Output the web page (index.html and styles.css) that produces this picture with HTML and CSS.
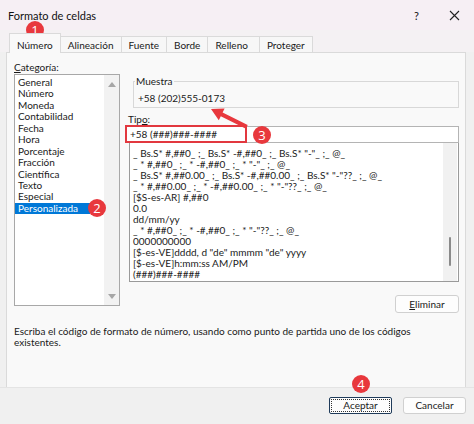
FILE: index.html
```html
<!DOCTYPE html>
<html lang="es">
<head>
<meta charset="utf-8">
<title>Formato de celdas</title>
<link rel="stylesheet" href="styles.css">
</head>
<body>
<div class="window">
  <header class="titlebar">
    <span class="title">Formato de celdas</span>
    <div class="title-actions">
      <span class="help">?</span>
      <svg class="close" width="11" height="11" viewBox="0 0 11 11"><path d="M1 1L10 10M10 1L1 10" stroke="#222" stroke-width="1.1" fill="none"/></svg>
    </div>
  </header>
  <nav class="tabs">
    <div class="tab active">Número</div>
    <div class="tab">Alineación</div>
    <div class="tab">Fuente</div>
    <div class="tab">Borde</div>
    <div class="tab wide">Relleno</div>
    <div class="tab">Proteger</div>
  </nav>
  <main class="panel">
    <div class="columns">
      <section class="cat">
        <div class="label"><u>C</u>ategoría:</div>
        <div class="catlist">
          <ul class="items">
            <li>General</li>
            <li>Número</li>
            <li>Moneda</li>
            <li>Contabilidad</li>
            <li>Fecha</li>
            <li>Hora</li>
            <li>Porcentaje</li>
            <li>Fracción</li>
            <li>Científica</li>
            <li>Texto</li>
            <li>Especial</li>
            <li class="selected">Personalizada</li>
          </ul>
          <div class="vscroll">
            <svg width="8" height="5" viewBox="0 0 8 5"><path d="M0 5L4 0L8 5Z" fill="#a6a6a6"/></svg>
            <svg width="8" height="5" viewBox="0 0 8 5"><path d="M0 0L4 5L8 0Z" fill="#a6a6a6"/></svg>
          </div>
        </div>
      </section>
      <section class="fmt">
        <fieldset class="sample">
          <legend>Muestra</legend>
          <div class="sample-value">+58 (202)555-0173</div>
        </fieldset>
        <div class="label tipo">Tip<u>o</u>:</div>
        <div class="input">+58 (###)###-####</div>
        <div class="fmtlist">
          <ul class="codes">
            <li>_ Bs.S* #,##0_ ;_ Bs.S* -#,##0_ ;_ Bs.S* "-"_ ;_ @_</li>
            <li>_ * #,##0_ ;_ * -#,##0_ ;_ * "-"_ ;_ @_</li>
            <li>_ Bs.S* #,##0.00_ ;_ Bs.S* -#,##0.00_ ;_ Bs.S* "-"??_ ;_ @_</li>
            <li>_ * #,##0.00_ ;_ * -#,##0.00_ ;_ * "-"??_ ;_ @_</li>
            <li>[$S-es-AR] #,##0</li>
            <li>0.0</li>
            <li>dd/mm/yy</li>
            <li>_ * #,##0_ ;_ * -#,##0_ ;_ * "-"??_ ;_ @_</li>
            <li>0000000000</li>
            <li>[$-es-VE]dddd, d "de" mmmm "de" yyyy</li>
            <li>[$-es-VE]h:mm:ss AM/PM</li>
            <li>(###)###-####</li>
          </ul>
          <div class="vscroll2"><span class="thumb"></span></div>
        </div>
        <div class="btnrow"><button class="btn small"><u>E</u>liminar</button></div>
      </section>
    </div>
    <p class="desc">Escriba el código de formato de número, usando como punto de partida uno de los códigos existentes.</p>
  </main>
  <footer class="footer">
    <button class="btn default"><span class="focus">Aceptar</span></button>
    <button class="btn">Cancelar</button>
  </footer>

  <div class="redbox"></div>
  <svg class="arrow" width="474" height="424" viewBox="0 0 474 424">
    <polygon points="211,109 224.6,108.6 222.6,112.6 247.7,125.1 245.9,128.7 220.8,116.2 218.8,120.2" fill="#e8383d"/>
  </svg>
  <span class="badge b1">1</span>
  <span class="badge b2">2</span>
  <span class="badge b3">3</span>
  <span class="badge b4">4</span>
</div>
</body>
</html>
```

FILE: styles.css
```css
* { box-sizing: border-box; }
html, body { margin: 0; padding: 0; }
body {
  width: 474px;
  height: 424px;
  overflow: hidden;
  background: #f3f3f3;
  font-family: Lato, "Noto Sans", sans-serif;
  font-size: 10px;
  color: #1a1a1a;
}
.window {
  position: relative;
  width: 474px;
  height: 424px;
  display: flex;
  flex-direction: column;
  background: #f0f0f0;
}
.titlebar {
  height: 30px;
  flex: none;
  display: flex;
  align-items: center;
  justify-content: space-between;
  padding: 0 14px 0 8px;
  background: #f6eff4;
  font-size: 11px;
  line-height: 13px;
  color: #111;
}
.title-actions { display: flex; align-items: center; gap: 30px; }
.help { font-size: 11px; }
.close { display: block; }

.tabs {
  height: 22px;
  flex: none;
  display: flex;
  align-items: flex-end;
  padding-left: 10px;
  background: #f4f1f3;
}
.tab {
  height: 16px;
  padding: 0 7px;
  border: 1px solid #dadada;
  border-bottom: none;
  margin-left: -1px;
  background: #f7f7f7;
  display: flex;
  align-items: center;
  line-height: 12px;
  color: #1a1a1a;
}
.tab.wide { padding: 0 11px 0 7px; }
.tab.active {
  height: 20px;
  margin-bottom: -1px;
  padding-top: 2px;
  background: #f9f9f9;
  position: relative;
  z-index: 1;
}

.panel {
  flex: none;
  height: 336px;
  margin: 0 8px 0 6px;
  border: 1px solid #dadada;
  background: #f9f9f9;
  padding: 8px 6px 0 7px;
}
.columns {
  display: grid;
  grid-template-columns: 106px 334px;
  column-gap: 5px;
  align-items: start;
}
.label { line-height: 12px; height: 12px; }
.label u { text-decoration-thickness: 1px; text-underline-offset: 1px; }

.catlist {
  margin-top: 1px;
  height: 232px;
  border: 1px solid #a8a8a8;
  background: #fff;
  display: flex;
}
.items {
  list-style: none;
  margin: 0;
  padding: 2px 0 0 0;
  flex: 1;
}
.items li {
  line-height: 11.45px;
  height: 11.45px;
  padding-left: 3px;
  white-space: nowrap;
}
.items li.selected {
  width: 75px;
  background: #0078d7;
  color: #fff;
}
.vscroll {
  width: 15px;
  background: #f2f2f2;
  display: flex;
  flex-direction: column;
  justify-content: space-between;
  align-items: center;
  padding: 7px 0 6px;
}

.sample {
  margin: 14px 0 0 8px;
  padding: 5px 4px 3px 4px;
  border: 1px solid #d8d8d8;
  min-width: 0;
}
.sample legend {
  padding: 0 1px;
  margin-left: -3px;
  line-height: 12px;
}
.sample-value { line-height: 12px; }

.tipo { margin: 5px 0 0 3px; }
.input {
  margin-top: 1px;
  height: 17px;
  border: 1px solid #b4b4b4;
  background: #fff;
  padding-left: 4px;
  line-height: 15px;
}
.fmtlist {
  margin-left: 4px;
  height: 139px;
  border: 1px solid #9a9a9a;
  border-top: none;
  background: #fff;
  display: flex;
  overflow: hidden;
}
.codes {
  list-style: none;
  margin: 0;
  padding: 5px 0 0 3px;
  flex: 1;
}
.codes li {
  line-height: 11px;
  height: 11px;
  white-space: nowrap;
}
.vscroll2 {
  width: 14px;
  background: #f1f1f1;
  margin-right: 1px;
  display: flex;
  justify-content: center;
  padding-top: 94px;
}
.thumb {
  display: block;
  width: 2px;
  height: 29px;
  background: #8a8a8a;
  border-radius: 1px;
}

.btnrow {
  display: flex;
  justify-content: flex-end;
  margin-top: 13px;
}
.btn {
  font-family: inherit;
  font-size: 10px;
  color: #1a1a1a;
  width: 63px;
  height: 17px;
  padding: 0;
  border: 1px solid #d0d0d0;
  border-radius: 3px;
  background: #fdfdfd;
  line-height: 15px;
}
.btn.small { width: 64px; height: 18px; }
.btn u { text-decoration-thickness: 1px; text-underline-offset: 1px; }
.btn.default {
  border: 1px solid #1f3b5a;
  padding: 1px;
  border-radius: 2px;
}
.focus {
  display: block;
  height: 100%;
  border: 1px dotted #333;
  line-height: 11px;
}

.desc {
  margin: 13px 0 0 0;
  width: 442px;
  line-height: 11px;
}

.footer {
  flex: 1;
  display: flex;
  justify-content: flex-end;
  gap: 11px;
  padding: 9px 8px 0 0;
  background: #f0f0f0;
  border-top: 1px solid #e4e4e4;
  margin-top: -1px;
}

.redbox {
  position: absolute;
  left: 125px;
  top: 125px;
  width: 122px;
  height: 18px;
  border: 2px solid #e2383f;
}
.arrow {
  position: absolute;
  left: 0;
  top: 0;
  pointer-events: none;
}
.badge {
  position: absolute;
  width: 18px;
  height: 18px;
  border-radius: 50%;
  background: #e8383d;
  color: #fff;
  font-family: "Open Sans", "Noto Sans", sans-serif;
  font-size: 13px;
  line-height: 18px;
  text-align: center;
}
.b1 { left: 26px; top: 21px; }
.b2 { left: 88px; top: 199px; }
.b3 { left: 253px; top: 126px; }
.b4 { left: 352px; top: 375px; }
```
